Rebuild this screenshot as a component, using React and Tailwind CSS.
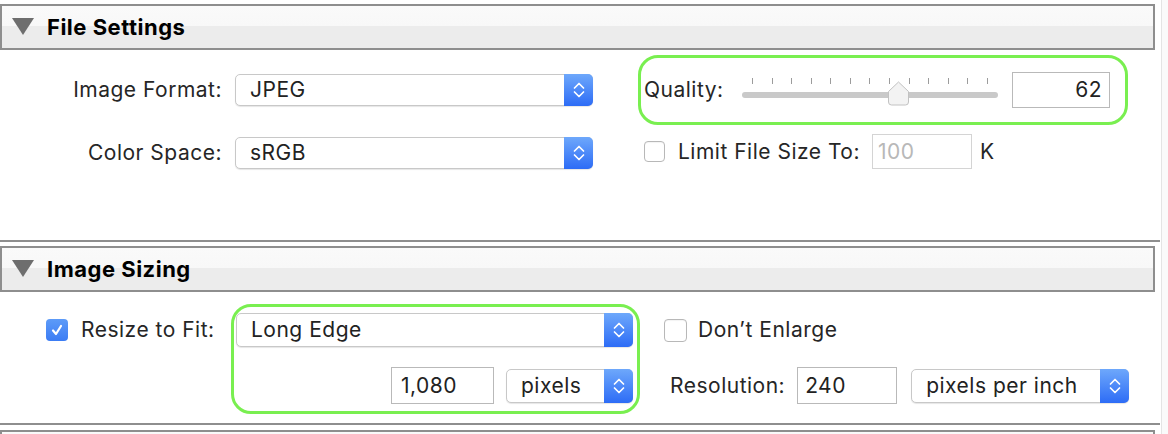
import React from "react";

const Chevrons = () => (
  <svg width="14" height="22" viewBox="0 0 14 22" fill="none" stroke="white" strokeWidth="1.7" strokeLinecap="round" strokeLinejoin="round">
    <path d="M2.5 9 L7 4.5 L11.5 9" />
    <path d="M2.5 13 L7 17.5 L11.5 13" />
  </svg>
);

function Select({ cls, label }) {
  return (
    <div className={"flex rounded-[5px] border border-[#c8c8c8] bg-white shadow-[0_1px_1px_rgba(0,0,0,0.10)] " + cls}>
      <div className="flex-1 flex items-center pl-[14px] text-[#222]">{label}</div>
      <div className="w-[29px] -my-px -mr-px rounded-r-[5px] bg-[linear-gradient(to_bottom,#6ea8fb,#2d6cf6)] flex items-center justify-center">
        <Chevrons />
      </div>
    </div>
  );
}

function Input({ cls, value, muted }) {
  return (
    <div className={"flex items-center border bg-white " + (muted ? "text-[#b8b8b8] border-[#d4d4d4] " : "text-[#222] border-[#b9b9b9] ") + cls}>
      {value}
    </div>
  );
}

function Checkbox({ checked, cls }) {
  if (checked) {
    return (
      <div className={"rounded-[4px] bg-[linear-gradient(to_bottom,#5d9bf8,#3b7cf4)] flex items-center justify-center " + cls}>
        <svg width="14" height="14" viewBox="0 0 14 14" fill="none" stroke="white" strokeWidth="2.2" strokeLinecap="round" strokeLinejoin="round">
          <path d="M3 7.5 L6 11 L11 3" />
        </svg>
      </div>
    );
  }
  return <div className={"rounded-[4px] border border-[#b8b8b8] bg-white shadow-[inset_0_1px_1px_rgba(0,0,0,0.05)] " + cls}></div>;
}

function Header({ title }) {
  return (
    <div className="w-[1155px] h-[46px] shrink-0 border-2 border-[#8e8e8e] bg-[linear-gradient(to_bottom,#fafafa_0%,#f8f8f8_47%,#ececec_47%,#ececec_100%)] flex items-center">
      <svg className="ml-[10px]" width="22" height="18" viewBox="0 0 22 18">
        <polygon points="0,0 22,0 11,17" fill="#6e6e6e" />
      </svg>
      {title ? <span className="ml-[13px] text-[22px] font-bold tracking-[0.5px] text-black">{title}</span> : null}
    </div>
  );
}

function Slider() {
  const ticks = Array.from({ length: 13 });
  return (
    <div className="relative w-[256px] h-[28px] mt-[4px]">
      <div className="flex justify-between px-[10px] h-[6px]">
        {ticks.map((_, i) => (
          <div key={i} className="w-px h-[6px] bg-[#9c9c9c]" />
        ))}
      </div>
      <div className="mt-[8px] h-[6px] rounded-full bg-[#c9c9c9]" />
      <svg className="absolute left-[145px] top-[3px]" width="23" height="25" viewBox="0 0 23 25">
        <path d="M1.5 10.5 L11.5 1 L21.5 10.5 L21.5 21 Q21.5 24 18.5 24 L4.5 24 Q1.5 24 1.5 21 Z" fill="#f3f3f3" stroke="#c2c2c2" strokeWidth="1" />
      </svg>
    </div>
  );
}

export default function App() {
  return (
    <div className="w-[1168px] h-[434px] overflow-hidden bg-white flex font-[family-name:Inter,sans-serif] text-[21px] tracking-[0.5px] text-[#262626]">
      <div className="w-[1161px] flex flex-col pt-[4px]">
        <Header title="File Settings" />
        <div className="h-[190px] shrink-0 flex">
          <div className="w-[638px] pt-[24px] flex flex-col">
            <div className="flex items-center h-[32px]">
              <div className="w-[222px] text-right">Image Format:</div>
              <Select cls="ml-[13px] w-[358px] h-[32px]" label="JPEG" />
            </div>
            <div className="flex items-center h-[32px] mt-[31px]">
              <div className="w-[222px] text-right">Color Space:</div>
              <Select cls="ml-[13px] w-[358px] h-[32px]" label="sRGB" />
            </div>
          </div>
          <div className="pt-[5px] flex flex-col">
            <div className="w-[490px] h-[70px] border-[3px] border-[#79ef50] rounded-[20px] flex items-center pl-[3px]">
              <div className="w-[98px]">Quality:</div>
              <Slider />
              <Input cls="ml-[14px] w-[98px] h-[36px] justify-end pr-[7px]" value="62" />
            </div>
            <div className="flex items-center ml-[6px] mt-[9px] h-[35px]">
              <Checkbox cls="w-[21px] h-[21px]" />
              <div className="ml-[13px]">Limit File Size To:</div>
              <Input cls="ml-[12px] w-[100px] h-[35px] pl-[5px]" value="100" muted />
              <div className="ml-[8px]">K</div>
            </div>
          </div>
        </div>
        <div className="w-[1160px] h-[2px] shrink-0 bg-[#8e8e8e]" />
        <div className="mt-[4px]">
          <Header title="Image Sizing" />
        </div>
        <div className="h-[131px] shrink-0 flex items-start">
          <div className="w-[231px] pl-[46px] pt-[21px]">
            <div className="flex items-center h-[34px]">
              <Checkbox checked cls="w-[22px] h-[22px]" />
              <div className="ml-[13px]">Resize to Fit:</div>
            </div>
          </div>
          <div className="mt-[12px] w-[409px] h-[110px] border-[3px] border-[#79ef50] rounded-[20px] pt-[6px] pl-[2px] pr-[4px] flex flex-col">
            <Select cls="w-full h-[34px]" label="Long Edge" />
            <div className="flex items-center justify-end mt-[20px]">
              <Input cls="w-[103px] h-[37px] pl-[9px]" value="1,080" />
              <Select cls="ml-[12px] w-[127px] h-[34px]" label="pixels" />
            </div>
          </div>
          <div className="ml-[24px] pt-[21px] flex flex-col">
            <div className="flex items-center h-[34px]">
              <Checkbox cls="w-[23px] h-[23px]" />
              <div className="ml-[11px]">Don’t Enlarge</div>
            </div>
            <div className="flex items-center ml-[6px] mt-[20px] h-[37px]">
              <div>Resolution:</div>
              <Input cls="ml-[12px] w-[100px] h-[37px] pl-[7px]" value="240" />
              <Select cls="ml-[14px] w-[218px] h-[34px]" label="pixels per inch" />
            </div>
          </div>
        </div>
        <div className="w-[1160px] h-[2px] shrink-0 bg-[#8e8e8e]" />
        <div className="mt-[5px]">
          <Header />
        </div>
      </div>
      <div className="flex-1 border-l border-[#e4e4e4] bg-[#fafafa]" />
    </div>
  );
}
